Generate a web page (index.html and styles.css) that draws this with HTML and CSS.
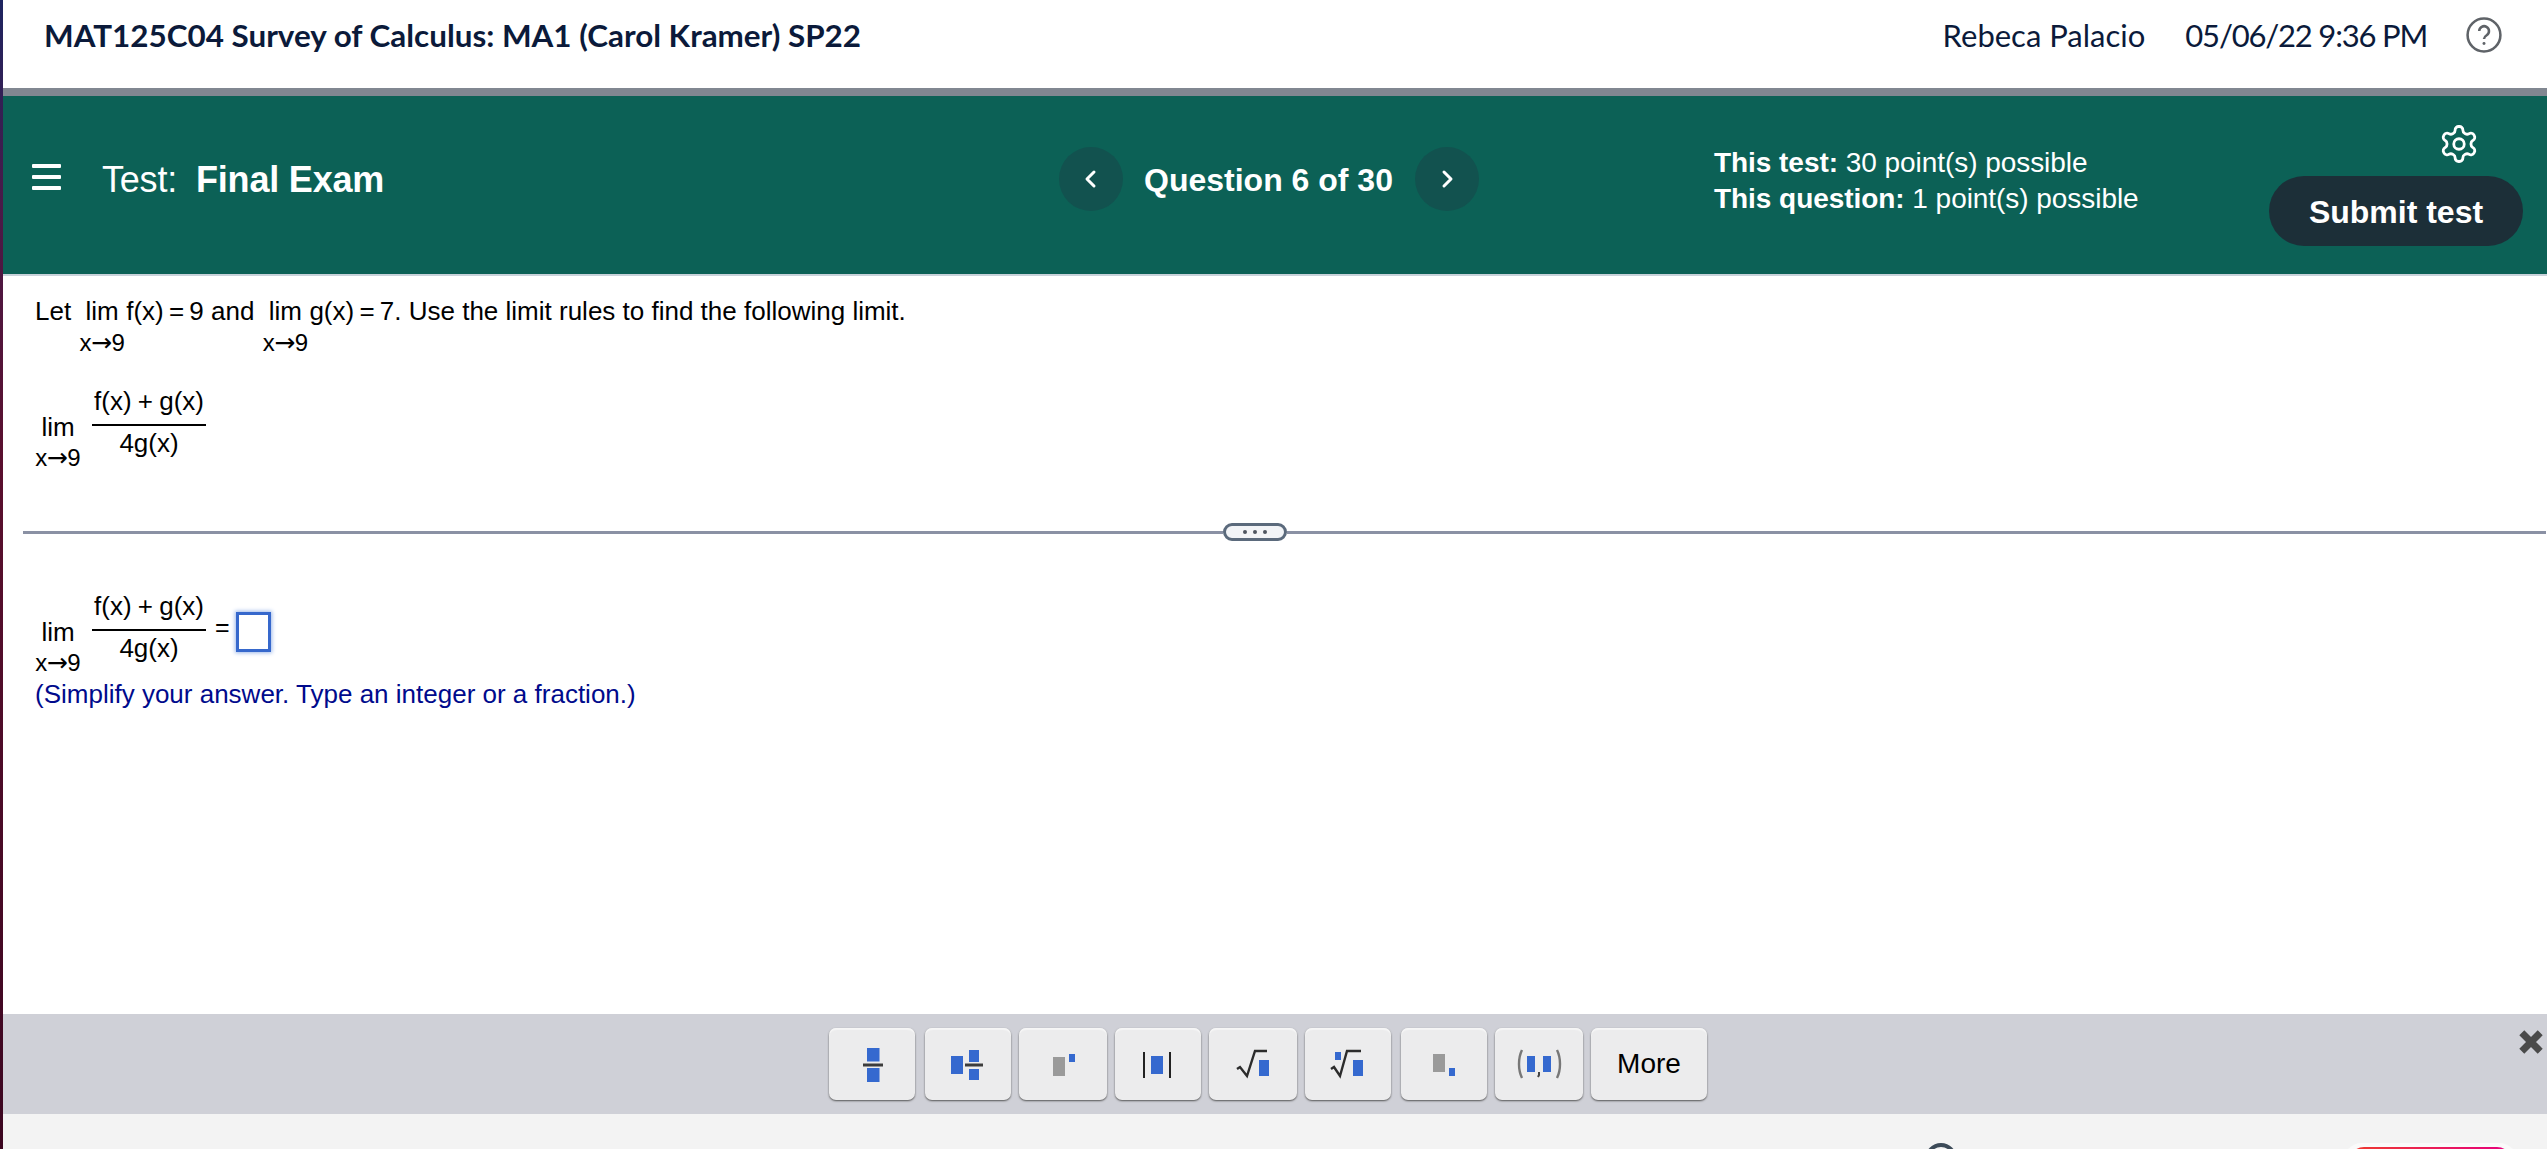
FILE: index.html
```html
<!DOCTYPE html>
<html lang="en">
<head>
<meta charset="utf-8">
<title>Final Exam</title>
<link rel="stylesheet" href="styles.css">
</head>
<body>
<div class="edge"></div>
<div class="page">
  <header class="top">
    <div class="course">MAT125C04 Survey of Calculus: MA1 (Carol Kramer) SP22</div>
    <div class="user">Rebeca Palacio</div>
    <div class="stamp">05/06/22 9:36 PM</div>
    <svg class="help" viewBox="0 0 34 34"><circle cx="17" cy="17" r="15.5"/><path d="M12.5 13.2a4.6 4.6 0 1 1 7 4c-1.6 1-2.5 1.8-2.5 3.6"/><circle class="dot" cx="17" cy="25" r="1.4"/></svg>
  </header>
  <section class="band">
    <div class="title-group">
      <div class="burger"><i></i><i></i><i></i></div>
      <div class="test-name">Test:<b>Final Exam</b></div>
    </div>
    <div class="nav-group">
      <div class="round"><svg viewBox="0 0 64 64"><path d="M35 25l-7 7 7 7"/></svg></div>
      <div class="qnum">Question 6 of 30</div>
      <div class="round"><svg viewBox="0 0 64 64"><path d="M29 25l7 7-7 7"/></svg></div>
    </div>
    <div class="points">
      <div><b>This test:</b> 30 point(s) possible</div>
      <div><b>This question:</b> 1 point(s) possible</div>
    </div>
    <div class="actions">
      <svg class="gear" viewBox="0 0 24 24"><path d="M12.22 2h-.44a2 2 0 0 0-2 2v.18a2 2 0 0 1-1 1.73l-.43.25a2 2 0 0 1-2 0l-.15-.08a2 2 0 0 0-2.73.73l-.22.38a2 2 0 0 0 .73 2.73l.15.1a2 2 0 0 1 1 1.72v.51a2 2 0 0 1-1 1.74l-.15.09a2 2 0 0 0-.73 2.73l.22.38a2 2 0 0 0 2.73.73l.15-.08a2 2 0 0 1 2 0l.43.25a2 2 0 0 1 1 1.73V20a2 2 0 0 0 2 2h.44a2 2 0 0 0 2-2v-.18a2 2 0 0 1 1-1.73l.43-.25a2 2 0 0 1 2 0l.15.08a2 2 0 0 0 2.73-.73l.22-.39a2 2 0 0 0-.73-2.73l-.15-.08a2 2 0 0 1-1-1.74v-.5a2 2 0 0 1 1-1.74l.15-.09a2 2 0 0 0 .73-2.73l-.22-.38a2 2 0 0 0-2.73-.73l-.15.08a2 2 0 0 1-2 0l-.43-.25a2 2 0 0 1-1-1.73V4a2 2 0 0 0-2-2z"/><circle cx="12" cy="12" r="3"/></svg>
      <div class="submit">Submit test</div>
    </div>
  </section>
  <main class="content">
    <div class="question">
      <div class="prompt">
        <span class="txt">Let</span>
        <span class="limit"><span>lim</span><span class="to">x<span class="arrow">→</span>9</span></span>
        <span class="txt">f(x) <span class="tight">=</span> 9 and</span>
        <span class="limit"><span>lim</span><span class="to">x<span class="arrow">→</span>9</span></span>
        <span class="txt">g(x) <span class="tight">=</span> 7. Use the limit rules to find the following limit.</span>
      </div>
      <div class="expr first">
        <span class="limit stack"><span>lim</span><span class="to">x<span class="arrow">→</span>9</span></span>
        <span class="frac"><span class="num">f(x) + g(x)</span><span class="den">4g(x)</span></span>
      </div>
    </div>
    <div class="divider"><div class="rule short"></div><div class="pill"><i></i><i></i><i></i></div><div class="rule"></div></div>
    <div class="answer">
      <div class="expr">
        <span class="limit stack"><span>lim</span><span class="to">x<span class="arrow">→</span>9</span></span>
        <span class="frac"><span class="num">f(x) + g(x)</span><span class="den">4g(x)</span></span>
        <span class="eq">=</span>
        <span class="box"></span>
      </div>
      <div class="hint">(Simplify your answer. Type an integer or a fraction.)</div>
    </div>
  </main>
  <section class="palette">
    <div class="btn"><svg viewBox="0 0 86 72"><rect class="b" x="38" y="20" width="12.5" height="13.5"/><path class="bar" d="M34 37h20"/><rect class="b" x="38" y="40" width="12.5" height="14"/></svg></div>
    <div class="btn"><svg viewBox="0 0 86 72"><rect class="b" x="26" y="28" width="12" height="18"/><rect class="b" x="44" y="22" width="10" height="12"/><path class="bar" d="M40 37h18"/><rect class="b" x="44" y="41" width="10" height="11"/></svg></div>
    <div class="btn wide"><svg viewBox="0 0 88 72"><rect class="g" x="34" y="29" width="12" height="19"/><rect class="b" x="50" y="26" width="6" height="8"/></svg></div>
    <div class="btn"><svg viewBox="0 0 86 72"><path class="thin" d="M29 24v26M55 24v26"/><rect class="b" x="36" y="28" width="12" height="18"/></svg></div>
    <div class="btn wide"><svg viewBox="0 0 88 72"><path class="root" d="M28 41l3-2 7 9 8-25h12"/><rect class="b" x="50" y="32" width="10" height="16"/></svg></div>
    <div class="btn"><svg viewBox="0 0 86 72"><rect class="b" x="30" y="24" width="6" height="8"/><path class="root" d="M26 41l3-2 6 9 7-25h14"/><rect class="b" x="48" y="32" width="10" height="16"/></svg></div>
    <div class="btn"><svg viewBox="0 0 86 72"><rect class="g" x="32" y="26" width="12" height="18"/><rect class="b" x="48" y="40" width="6" height="8"/></svg></div>
    <div class="btn wide"><svg viewBox="0 0 88 72"><path class="paren" d="M27 22c-4 8-4 20 0 28M62 22c4 8 4 20 0 28"/><rect class="b" x="32" y="28" width="8" height="16"/><path class="comma" d="M44 44v3l-1 2"/><rect class="b" x="48" y="28" width="8" height="16"/></svg></div>
    <div class="btn more">More</div>
    <svg class="close" viewBox="0 0 24 24"><path d="M3.5 3.5l17 17M20.500 3.500l-17 17"/></svg>
  </section>
  <footer class="foot">
    <span class="foot-circle"></span>
    <span class="foot-halo"><span class="foot-btn"></span></span>
  </footer>
</div>
</body>
</html>
```
FILE: styles.css
```css
* { box-sizing: border-box; }
html, body { margin: 0; padding: 0; }
body {
  width: 2547px;
  height: 1149px;
  overflow: hidden;
  display: flex;
  font-family: "Liberation Sans", Arial, sans-serif;
  background: #fff;
}
.edge {
  width: 3px;
  flex: none;
  background: linear-gradient(#1d2460 0, #4a1a48 18%, #5a0f2e 40%, #3c0620 100%);
}
.page {
  flex: 1;
  min-width: 0;
  display: flex;
  flex-direction: column;
}
.top {
  height: 96px;
  flex: none;
  border-bottom: 8px solid #818791;
  display: flex;
  align-items: center;
  padding: 0 0 19px 41px;
  color: #0b1a3a;
  font-family: Lato, sans-serif;
  font-size: 31px;
}
.course { font-size: 31.4px; font-weight: 700; margin-right: auto; }
.user { margin-right: 40px; }
.stamp { margin-right: 39px; letter-spacing: -1.2px; }
.help { width: 36px; height: 36px; margin-right: 45px; fill: none; stroke: #5f6368; stroke-width: 2.4; }
.help .dot { fill: #5f6368; stroke: none; }

.band {
  height: 180px;
  flex: none;
  background: #0c6156;
  border-bottom: 2px solid #c9d2da;
  color: #fff;
  display: grid;
  grid-template-columns: 1027px 655px 1fr 254px;
  padding: 0 24px 12px 29px;
  align-items: center;
}
.title-group { display: flex; align-items: center; }
.burger { width: 29px; display: flex; flex-direction: column; gap: 7px; margin: -4px 41px 0 0; }
.burger i { display: block; height: 4px; background: #fff; border-radius: 1px; }
.test-name { padding-top: 2px; font-size: 36px; letter-spacing: -.2px; }
.test-name b { margin-left: 19px; }
.nav-group { display: flex; align-items: center; }
.round { width: 64px; height: 64px; border-radius: 50%; background: #12524f; }
.round svg { display: block; width: 64px; height: 64px; fill: none; stroke: #fff; stroke-width: 3; stroke-linecap: round; stroke-linejoin: round; }
.qnum { font-size: 32px; font-weight: 700; margin: 2px 22px 0 21px; white-space: nowrap; }
.points { margin-top: 4px; font-size: 28px; line-height: 36px; white-space: nowrap; letter-spacing: -.05px; }
.actions { align-self: start; display: flex; flex-direction: column; align-items: flex-end; padding-top: 27px; }
.gear { width: 42px; height: 42px; margin: 0 43px 11px 0; fill: none; stroke: #fff; stroke-width: 1.6; stroke-linejoin: round; }
.submit {
  width: 254px;
  height: 70px;
  padding-top: 2px;
  border-radius: 35px;
  background: #1c2f38;
  font-size: 32px;
  font-weight: 700;
  display: flex;
  align-items: center;
  justify-content: center;
}

.content { flex: 1; min-height: 0; overflow: hidden; color: #000; font-size: 26px; padding: 0 1px 0 20px; }
.question { height: 247px; padding: 20px 0 0 12px; }
.prompt { display: flex; align-items: flex-start; line-height: 30px; white-space: nowrap; }
.tight { margin: 0 -2px; }
.limit { display: inline-flex; flex-direction: column; align-items: center; line-height: 30px; margin: 0 0 0 7px; width: 48px; }
.limit .to { font-size: 24px; margin-top: 2px; white-space: nowrap; }
.limit.stack .to { margin-top: 1px; }
.arrow { font-family: "DejaVu Sans", sans-serif; font-size: 25px; letter-spacing: -.5px; margin-left: -.5px; }
.expr { display: flex; align-items: flex-start; }
.expr.first { margin-top: 28px; }
.limit.stack { margin: 26px 0 0 -1px; }
.frac { display: inline-flex; flex-direction: column; align-items: center; width: 114px; margin-left: 10px; line-height: 30px; }
.num { height: 40px; border-bottom: 2px solid #000; width: 100%; text-align: center; line-height: 30px; word-spacing: -1px; }
.den { margin-top: 2px; }
.eq { margin: 21px 0 0 9px; font-size: 25px; line-height: 30px; }
.box { width: 35px; height: 40px; margin: 21px 0 0 6px; border: 3px solid #3668cc; box-shadow: 0 0 4px 1px #9db8ea; background: #fff; }
.divider { display: flex; align-items: center; height: 18px; }
.rule { flex: 1; height: 3px; background: #8a91a4; }
.rule.short { flex: none; width: 1200px; }
.pill {
  width: 64px;
  height: 18px;
  border: 3px solid #5b6a7c;
  border-radius: 9px;
  background: #f2f4f7;
  display: flex;
  justify-content: center;
  align-items: center;
  gap: 6px;
}
.pill i { width: 4px; height: 4px; border-radius: 50%; background: #4f5560; }
.answer { padding: 50px 0 0 12px; }
.hint { color: #000a8c; margin-top: 1px; line-height: 30px; white-space: nowrap; }

.palette {
  height: 100px;
  flex: none;
  background: #cfd0d7;
  position: relative;
  display: flex;
  align-items: flex-start;
  gap: 8px;
  padding: 14px 0 0 826px;
}
.btn {
  width: 86px;
  height: 72px;
  flex: none;
  background: #ececed;
  border-radius: 7px;
  box-shadow: 0 1px 2px 0 #555, inset 0 2px 1px #f6f6f6;
}
.btn:nth-child(1), .btn:nth-child(6) { margin-right: 2px; }
.btn.wide { width: 88px; }
.btn svg { display: block; width: 100%; height: 100%; }
.btn.more { width: 116px; display: flex; align-items: center; justify-content: center; font-size: 28px; color: #000; }
.b { fill: #3569cf; }
.g { fill: #9a9a9a; }
.bar { stroke: #3c3c3c; stroke-width: 3; fill: none; }
.thin { stroke: #222; stroke-width: 2; fill: none; }
.root { stroke: #2c2c2c; stroke-width: 2.4; fill: none; }
.paren { stroke: #777; stroke-width: 2.4; fill: none; }
.comma { stroke: #444; stroke-width: 2; fill: none; }
.close { position: absolute; right: 3px; top: 15px; width: 26px; height: 26px; fill: none; stroke: #4a4a4a; stroke-width: 6.500; }

.foot { flex: none; height: 35px; background: #f3f3f3; position: relative; overflow: hidden; }
.foot-circle { position: absolute; left: 1922px; top: 29px; width: 32px; height: 32px; border: 4px solid #3c4a58; border-radius: 50%; }
.foot-halo { position: absolute; left: 2340px; top: 29px; padding: 4px 6px; border-radius: 19px; background: #fafafa; }
.foot-btn { display: block; width: 163px; height: 30px; border-radius: 15px; background: linear-gradient(90deg, #ee3b2e, #e6007e); }
```
